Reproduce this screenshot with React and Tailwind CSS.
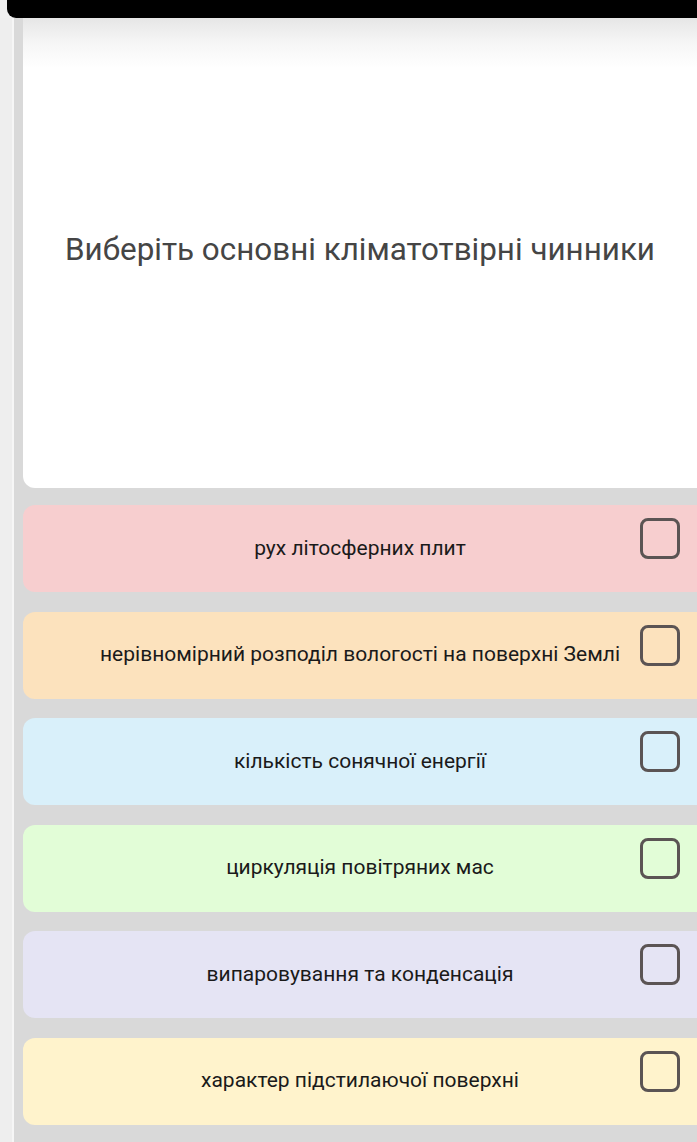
import React from "react";

const options = [
  { text: "рух літосферних плит", bg: "bg-[#f7cecf]" },
  { text: "нерівномірний розподіл вологості на поверхні Землі", bg: "bg-[#fce2bd]" },
  { text: "кількість сонячної енергії", bg: "bg-[#d9f0fa]" },
  { text: "циркуляція повітряних мас", bg: "bg-[#e2fdd7]" },
  { text: "випаровування та конденсація", bg: "bg-[#e5e4f4]" },
  { text: "характер підстилаючої поверхні", bg: "bg-[#fff3cc]" },
];

export default function App() {
  return (
    <div
      className="w-[697px] h-[1142px] overflow-hidden bg-[#efefef] flex"
      style={{ fontFamily: "Roboto, 'Noto Sans', sans-serif" }}
    >
      <div className="w-[12px] shrink-0 bg-[#eeeeee]" />
      <div className="w-[2px] shrink-0 bg-[#f6f6f6]" />
      <div className="flex-1 flex flex-col bg-[#d9d9d9] relative">
        <div className="h-[18px] shrink-0 bg-[#efefef] -ml-[14px] pl-[7px]">
          <div className="h-full bg-black rounded-bl-[9px]" />
        </div>
        <div className="pl-[9px]">
          <div className="h-[470px] rounded-bl-[12px] bg-[linear-gradient(to_bottom,#e6e6e6_0px,#f6f6f6_25px,#ffffff_50px)] flex items-center justify-center">
            <span className="text-[31.4px] leading-none text-[#454545] whitespace-nowrap -mt-[6px]">
              Виберіть основні кліматотвірні чинники
            </span>
          </div>
        </div>
        <div className="pl-[9px] pt-[17px] flex flex-col gap-[19.5px]">
          {options.map((o, i) => (
            <div
              key={i}
              className={`relative h-[87px] rounded-l-[12px] ${o.bg} flex items-center justify-center`}
            >
              <span className="text-[21px] text-[#1a1a1a] whitespace-nowrap">{o.text}</span>
              <div className="absolute right-[17px] top-[13px] w-[40px] h-[41px] border-[3px] border-[#5b5454] rounded-[8px]" />
            </div>
          ))}
        </div>
      </div>
    </div>
  );
}
